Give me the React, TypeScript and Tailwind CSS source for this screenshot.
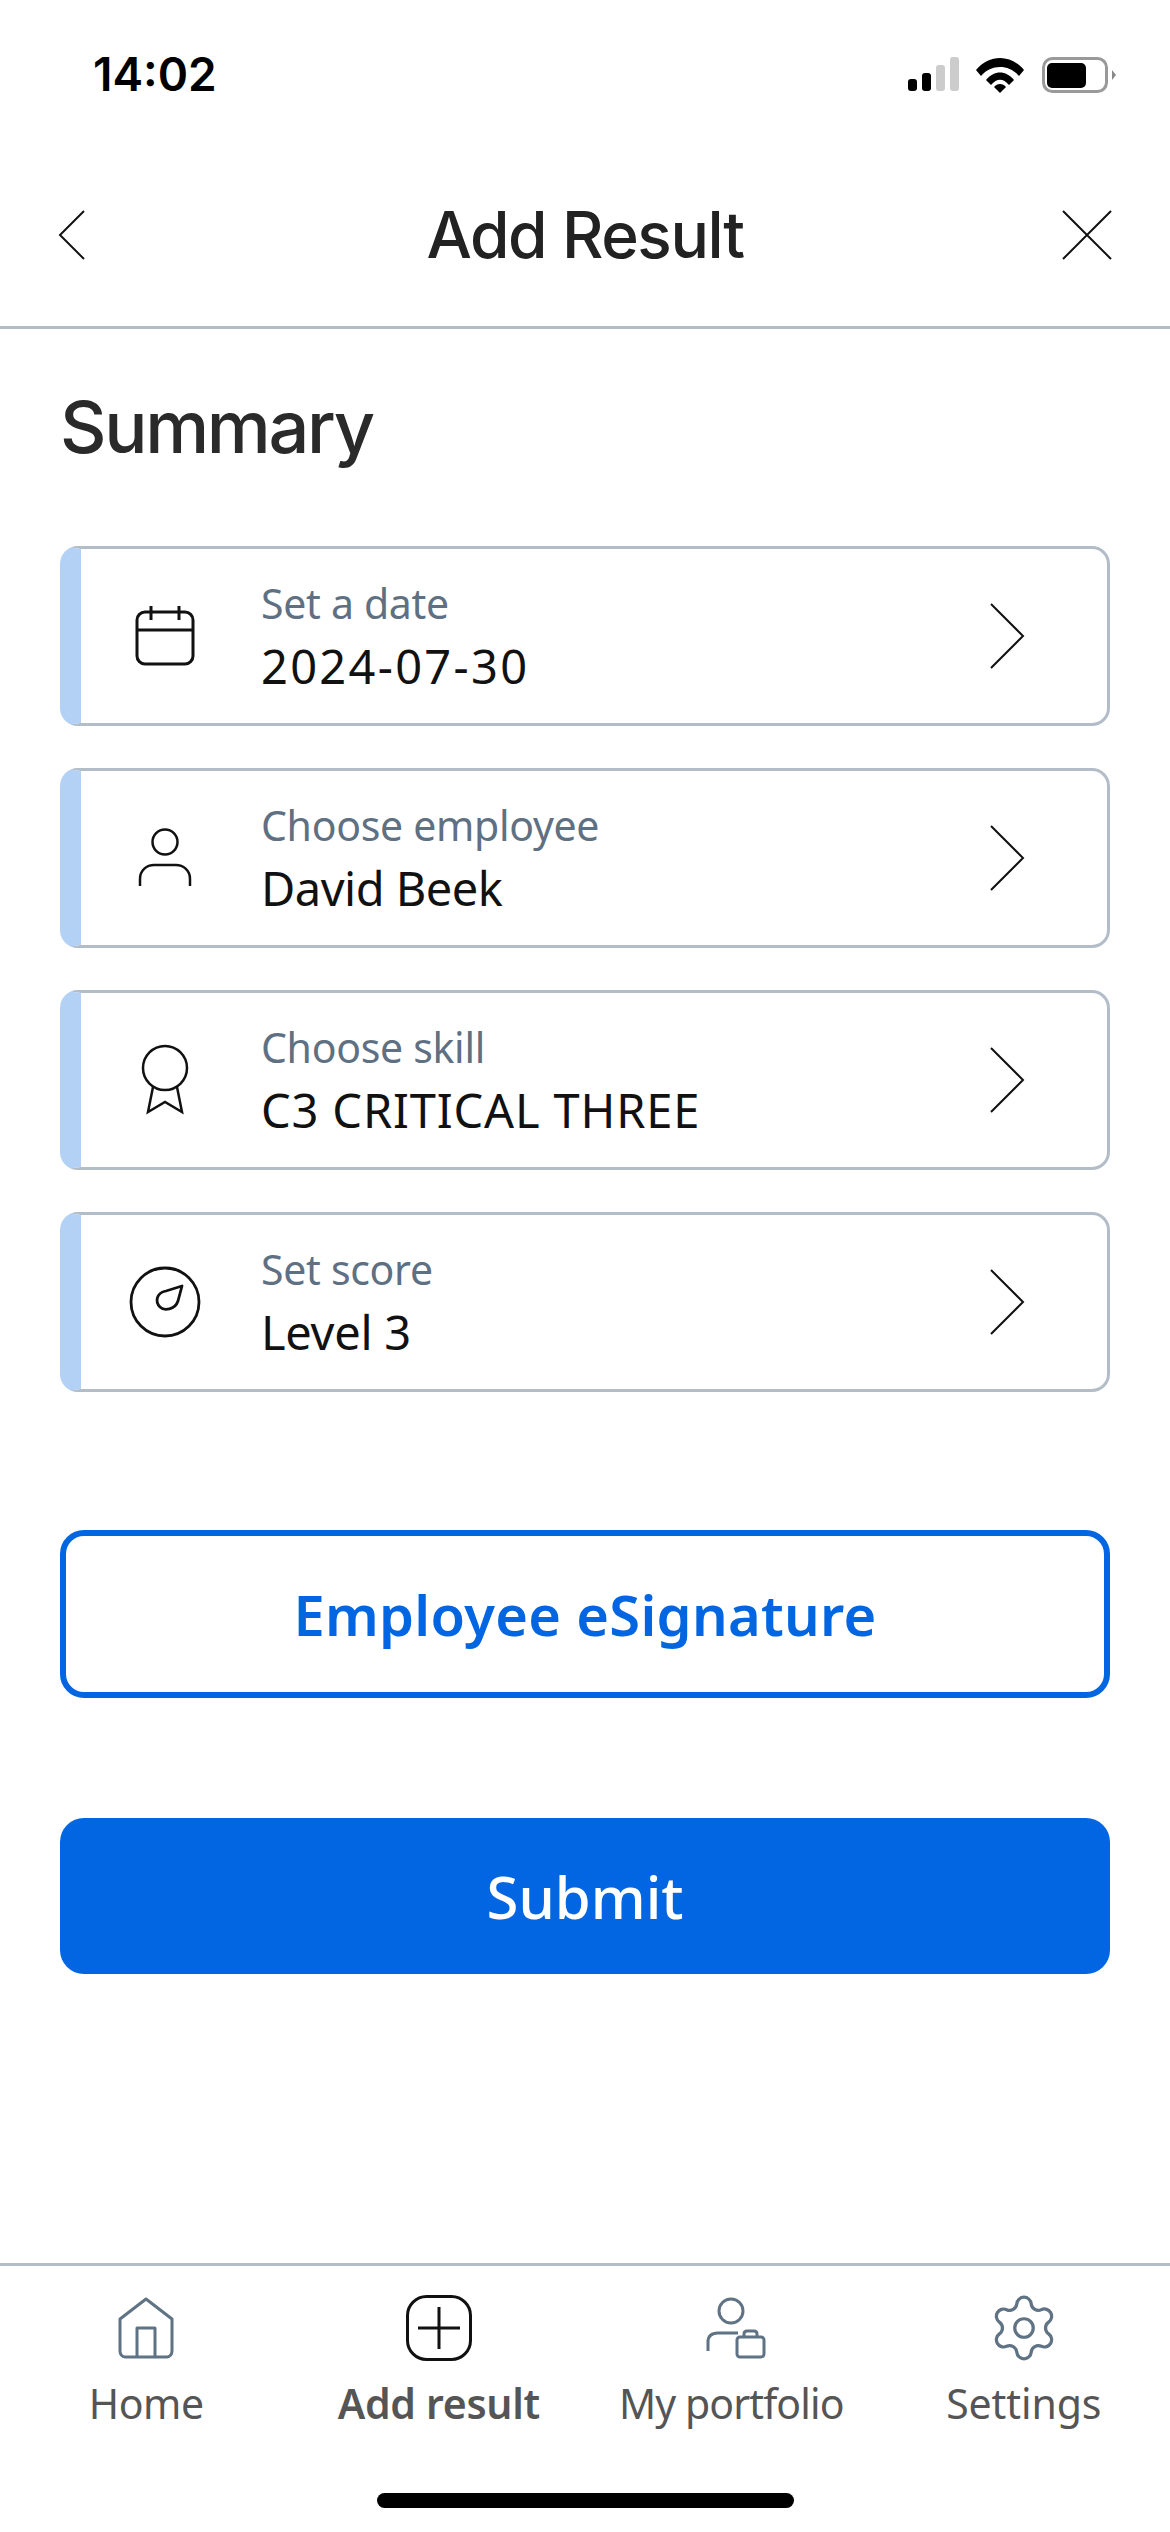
import type { ReactNode } from "react";

const rows = [
  { label: "Set a date", value: "2024-07-30", spacing: "tracking-[2.3px]", icon: <CalendarIcon /> },
  { label: "Choose employee", value: "David Beek", spacing: "tracking-[-0.5px]", icon: <PersonIcon /> },
  { label: "Choose skill", value: "C3 CRITICAL THREE", spacing: "tracking-[0.85px]", icon: <RibbonIcon /> },
  { label: "Set score", value: "Level 3", spacing: "tracking-[-0.3px]", icon: <CompassIcon /> },
];

const tabs = [
  { name: "Home", text: "tracking-[-0.4px]" },
  { name: "Add result", text: "font-semibold tracking-[-0.3px]" },
  { name: "My portfolio", text: "tracking-[-0.9px]" },
  { name: "Settings", text: "tracking-[-0.1px]" },
];

function CalendarIcon() {
  return (
    <svg width="60" height="62" viewBox="0 0 60 62" fill="none" stroke="#111" strokeWidth="3">
      <rect x="2" y="7" width="56" height="52" rx="8" />
      <path d="M2 25H58M16 1V15M44 1V15" />
    </svg>
  );
}

function PersonIcon() {
  return (
    <svg width="54" height="60" viewBox="0 0 54 60" fill="none" stroke="#111" strokeWidth="2.5">
      <circle cx="27" cy="14" r="12.5" />
      <path d="M2 58V51C2 42 9 37 16 37H38C45 37 52 42 52 51V58" />
    </svg>
  );
}

function RibbonIcon() {
  return (
    <svg width="50" height="72" viewBox="0 0 50 72" fill="none" stroke="#111" strokeWidth="2.5">
      <circle cx="25" cy="24" r="22" />
      <path d="M13 43L8 68L25 58L42 68L37 43" />
    </svg>
  );
}

function CompassIcon() {
  return (
    <svg width="72" height="72" viewBox="0 0 72 72" fill="none" stroke="#111" strokeWidth="2.8">
      <circle cx="36" cy="36" r="34" />
      <path d="M53 20L49 35C46 44 35 45 31 41C26 36 27 27 37 25Z" strokeLinejoin="round" />
    </svg>
  );
}

function Chevron() {
  return (
    <svg width="36" height="66" viewBox="0 0 36 66" fill="none" stroke="#111" strokeWidth="2">
      <path d="M2 1L34 33L2 65" />
    </svg>
  );
}

function TabIcon({ name }: { name: string }) {
  if (name === "Home") {
    return (
      <svg width="56" height="62" viewBox="0 0 56 62" fill="none" stroke="#5f7385" strokeWidth="3" strokeLinejoin="round">
        <path d="M2 22L28 2L54 22V54C54 57 52 60 49 60H7C4 60 2 57 2 54Z" />
        <path d="M19 60V31H37V60" />
      </svg>
    );
  }
  if (name === "Add result") {
    return (
      <svg width="66" height="66" viewBox="0 0 66 66" fill="none" stroke="#111" strokeWidth="3">
        <rect x="1.5" y="1.5" width="63" height="63" rx="19" />
        <path d="M33 12V54M12 33H54" />
      </svg>
    );
  }
  if (name === "My portfolio") {
    return (
      <svg className="ml-[10px]" width="60" height="62" viewBox="0 0 60 62" fill="none" stroke="#5f7385" strokeWidth="3">
        <circle cx="25" cy="14" r="12" />
        <path d="M2 54V45C2 38 7 36 12 36H32" />
        <rect x="31" y="40" width="27" height="20" rx="3" />
        <path d="M38 40V37C38 35 39 34 41 34H48C50 34 51 35 51 37V40" />
      </svg>
    );
  }
  return (
    <svg width="74" height="74" viewBox="0 0 24 24" fill="none" stroke="#5f7385" strokeWidth="1.05">
      <path d="M9.671 4.136a2.34 2.34 0 0 1 4.659 0 2.34 2.34 0 0 0 3.319 1.915 2.34 2.34 0 0 1 2.33 4.033 2.34 2.34 0 0 0 0 3.831 2.34 2.34 0 0 1-2.33 4.033 2.34 2.34 0 0 0-3.319 1.915 2.34 2.34 0 0 1-4.659 0 2.34 2.34 0 0 0-3.32-1.915 2.34 2.34 0 0 1-2.33-4.033 2.34 2.34 0 0 0 0-3.831A2.34 2.34 0 0 1 6.35 6.051a2.34 2.34 0 0 0 3.319-1.915" />
      <circle cx="12" cy="12" r="3" />
    </svg>
  );
}

function SummaryRow({ label, value, spacing, icon }: { label: string; value: string; spacing: string; icon: ReactNode }) {
  return (
    <div className="flex h-[180px] items-center rounded-[18px] border-[3px] border-l-[21px] border-[#b3bdc8] border-l-[#b3d1f5]">
      <div className="flex w-[168px] shrink-0 justify-center">{icon}</div>
      <div className="ml-[12px] flex flex-col">
        <span className="text-[41px] leading-[60px] tracking-[-0.3px] text-[#5e7082]">{label}</span>
        <span className={`text-[47px] leading-[66px] text-[#111] ${spacing}`}>{value}</span>
      </div>
      <div className="ml-auto mr-[82px]">
        <Chevron />
      </div>
    </div>
  );
}

export default function App() {
  return (
    <div className="flex h-[2532px] w-[1170px] flex-col bg-white font-['Noto_Sans',sans-serif]">
      {/* Status bar */}
      <div className="flex h-[149px] shrink-0 items-center justify-between pl-[93px] pr-[54px] font-['Inter',sans-serif]">
        <span className="text-[46px] font-semibold text-black">14:02</span>
        <div className="flex items-center">
          <svg width="52" height="36" viewBox="0 0 52 36">
            <rect x="0" y="22" width="9" height="12" rx="3" fill="#000" />
            <rect x="14" y="16" width="9" height="18" rx="3" fill="#000" />
            <rect x="28" y="8" width="9" height="26" rx="3" fill="#ccc" />
            <rect x="42" y="0" width="9" height="34" rx="3" fill="#ccc" />
          </svg>
          <svg className="ml-[16px]" width="48" height="36" viewBox="0 0 48 36">
            <path d="M0 13C13 -3 35 -3 48 13L43 19C33 7 15 7 5 19Z" />
            <path d="M10 23C18 13 30 13 38 23L33 28C27 21 21 21 15 28Z" />
            <path d="M18 30C21 26 27 26 30 30L24 36Z" />
          </svg>
          <svg className="ml-[18px]" width="74" height="36" viewBox="0 0 74 36">
            <rect x="1.5" y="1.5" width="63" height="33" rx="9" fill="none" stroke="#999" strokeWidth="3" />
            <rect x="5" y="6" width="39" height="25" rx="5" fill="#000" />
            <path d="M70 13L74 18L70 23Z" fill="#888" />
          </svg>
        </div>
      </div>

      {/* Header */}
      <div className="flex h-[180px] shrink-0 items-center border-b-[3px] border-[#b3bdc8] pb-[6px] pl-[58px] pr-[58px]">
        <div className="flex-1">
          <svg width="28" height="50" viewBox="0 0 28 50" fill="none" stroke="#111" strokeWidth="2">
            <path d="M26 1L2 25L26 49" />
          </svg>
        </div>
        <h1 className="font-['Inter',sans-serif] text-[64px] font-medium tracking-[-1.4px] text-[#222]">Add Result</h1>
        <div className="flex flex-1 justify-end">
          <svg width="50" height="50" viewBox="0 0 50 50" fill="none" stroke="#111" strokeWidth="2">
            <path d="M1 1L49 49M49 1L1 49" />
          </svg>
        </div>
      </div>

      {/* Content */}
      <div className="flex flex-col px-[60px]">
        <h2 className="mt-[54px] font-['Inter',sans-serif] text-[72px] font-medium leading-[88px] tracking-[-2.3px] text-[#2a2a2a]">Summary</h2>
        <div className="mt-[75px] flex flex-col gap-[42px]">
          {rows.map((r) => (
            <SummaryRow key={r.label} label={r.label} value={r.value} spacing={r.spacing} icon={r.icon} />
          ))}
        </div>
        <button className="mt-[138px] flex h-[168px] items-center justify-center rounded-[24px] border-[6px] border-[#0265e1] text-[56px] font-semibold tracking-[0.3px] text-[#0265e1]">
          Employee eSignature
        </button>
        <button className="mt-[120px] flex h-[156px] items-center justify-center rounded-[24px] bg-[#0265e1] text-[58px] font-medium text-white">
          Submit
        </button>
      </div>

      {/* Tab bar */}
      <div className="mt-auto grid shrink-0 grid-cols-4 border-t-[3px] border-[#b3bdc8] pt-[22px]">
        {tabs.map((t) => (
          <div key={t.name} className="flex flex-col items-center">
            <div className="flex h-[80px] items-center justify-center">
              <TabIcon name={t.name} />
            </div>
            <span className={`mt-[7px] text-[41px] leading-[56px] text-[#555] ${t.text}`}>{t.name}</span>
          </div>
        ))}
      </div>
      <div className="mb-[24px] mt-[62px] h-[15px] w-[417px] shrink-0 self-center rounded-full bg-black" />
    </div>
  );
}
